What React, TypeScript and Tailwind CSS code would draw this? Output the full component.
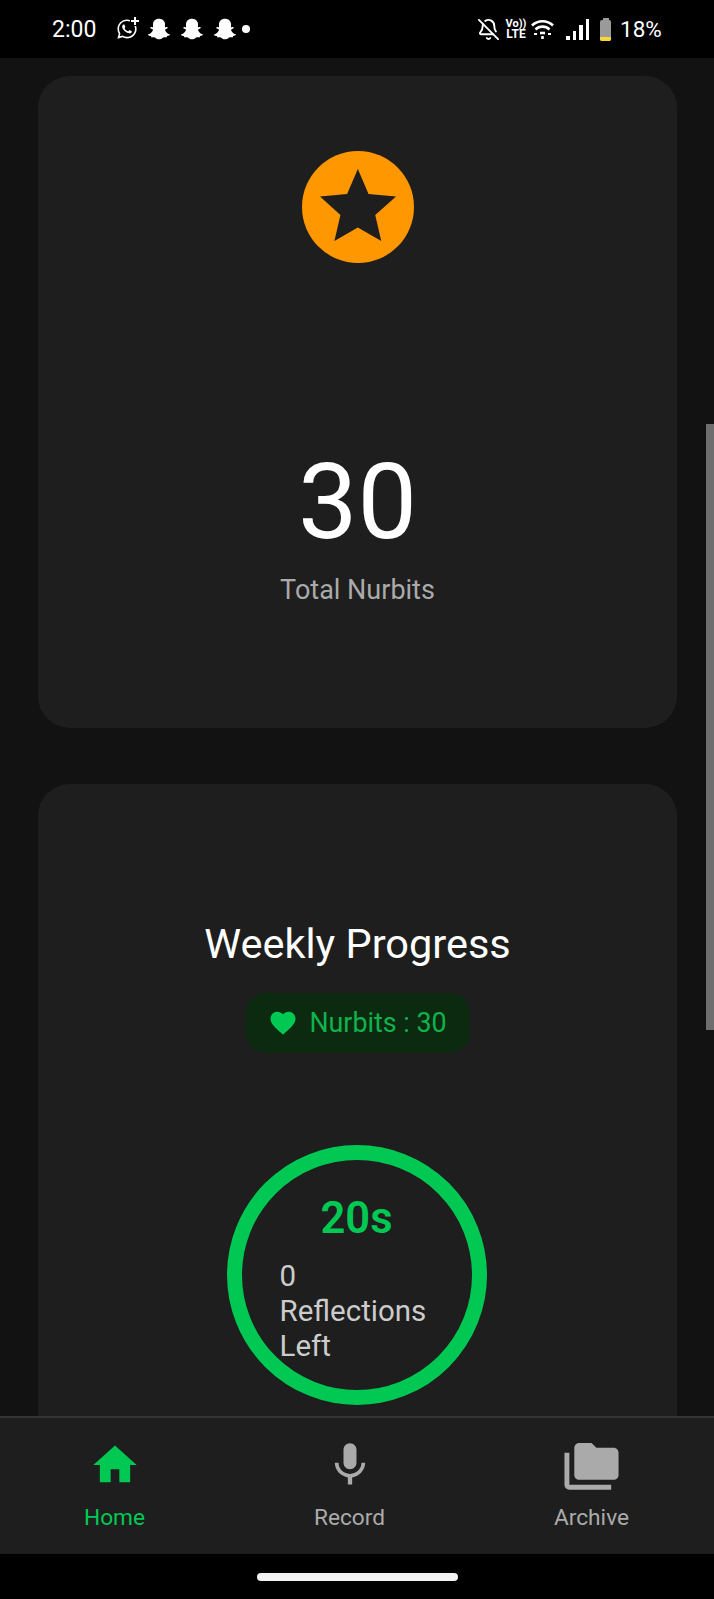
import { FaSnapchatGhost, FaWhatsapp } from 'react-icons/fa';
import { MdFavorite, MdFolderCopy, MdHome, MdMic } from 'react-icons/md';
import { BellOff } from 'lucide-react';

const NAV_ITEMS = [
  { label: 'Home', icon: MdHome, size: 52, active: true, width: 'w-[229px]', pad: 'pt-[21px]' },
  { label: 'Record', icon: MdMic, size: 52, active: false, width: 'w-[241px]', pad: 'pt-[21px]' },
  { label: 'Archive', icon: MdFolderCopy, size: 59, active: false, width: 'w-[243px]', pad: 'pt-[20px]' },
];

const StatusBar = () => (
  <div className="flex h-[58px] shrink-0 items-center bg-black pl-[52px] text-white">
    <span className="w-[64px] text-[23px] leading-none">2:00</span>
    <div className="relative h-[22px] w-[22px]">
      <FaWhatsapp size={22} />
      {/* 右上の「+」 */}
      <div className="absolute -top-[2px] -right-[2px] h-[10px] w-[10px] bg-black" />
      <svg className="absolute -top-[2px] -right-[2px]" width="10" height="10" viewBox="0 0 10 10">
        <path d="M5 1v8M1 5h8" stroke="white" strokeWidth="2" />
      </svg>
    </div>
    <div className="ml-[10px] flex items-center gap-[11px]">
      <FaSnapchatGhost size={22} />
      <FaSnapchatGhost size={22} />
      <FaSnapchatGhost size={22} />
    </div>
    <div className="ml-[6px] h-[8px] w-[8px] rounded-full bg-white" />

    <BellOff size={23} strokeWidth={2} className="ml-[227px]" />
    <div className="ml-[6px] flex w-[20px] flex-col items-center text-[12px] leading-[10px] font-bold">
      <span className="text-[11px]">Vo))</span>
      <span>LTE</span>
    </div>
    <svg className="ml-[5px]" width="23" height="20" viewBox="0 0 23 20" fill="none" stroke="white" strokeWidth="2.6">
      <path d="M1 6.5a15 15 0 0 1 21 0" />
      <path d="M4.5 10.5a10 10 0 0 1 14 0" />
      <path d="M9 14h5" />
      <path d="M11.5 17l0 3" />
      <path d="M3 15h3M17 15h3" strokeWidth="2" />
    </svg>
    <div className="ml-[12px] flex h-[21px] items-end gap-[3px]">
      <div className="h-[4px] w-[3.5px] bg-white" />
      <div className="h-[9px] w-[3.5px] bg-white" />
      <div className="h-[15px] w-[3.5px] bg-white" />
      <div className="h-[21px] w-[3.5px] bg-white" />
    </div>
    <div className="ml-[11px] flex h-[23px] w-[11px] flex-col items-center">
      <div className="h-[2px] w-[6px] bg-[#9a9a9a]" />
      <div className="flex w-full flex-1 flex-col justify-end overflow-hidden rounded-[2px] bg-[#9a9a9a]">
        <div className="h-[4px] bg-[#fdd835]" />
      </div>
    </div>
    <span className="ml-[9px] text-[22.5px] leading-none">18%</span>
  </div>
);

const BottomNav = () => (
  <nav className="flex h-[138px] shrink-0 border-t-2 border-[#333333] bg-[#1e1e1e]">
    {NAV_ITEMS.map((item) => {
      const Icon = item.icon;
      return (
        <div
          key={item.label}
          className={`flex h-full flex-col items-center ${item.width} ${item.active ? 'text-[#00c853]' : 'text-[#aaaaaa]'}`}
        >
          <div className={`h-[86px] ${item.pad}`}>
            <Icon size={item.size} />
          </div>
          <span className="text-[22.7px] leading-[28px]">{item.label}</span>
        </div>
      );
    })}
  </nav>
);

export default function App() {
  return (
    <div className="flex h-[1599px] w-[714px] flex-col overflow-hidden bg-black font-['Roboto',sans-serif]">
      <StatusBar />

      <main className="relative flex-1 overflow-hidden bg-[#121212] pt-[18px] pr-[37px] pl-[38px]">
        {/* Total Nurbits */}
        <section className="flex h-[652px] flex-col items-center rounded-[32px] bg-[#1e1e1e] pt-[75px]">
          <div className="flex h-[112px] w-[112px] items-center justify-center rounded-full bg-[#ff9800]">
            <svg className="mb-[4px]" width="76" height="72" viewBox="120 115 227 215">
              <polygon
                points="233,115 265,190 347,197 285,252 303,330 233,290 163,330 181,252 120,197 201,190"
                fill="#1e1e1e"
              />
            </svg>
          </div>
          <div className="mt-[181px] text-[106px] leading-[116px] text-white">30</div>
          <div className="mt-[15px] text-[27px] leading-[30px] text-[#aaaaaa]">Total Nurbits</div>
        </section>

        {/* Weekly Progress */}
        <section className="mt-[56px] flex h-[800px] flex-col items-center rounded-[32px] bg-[#1e1e1e] pt-[136px]">
          <h2 className="text-[41.5px] leading-[48px] text-white">Weekly Progress</h2>
          <div className="mt-[25px] flex h-[60px] w-[224px] items-center justify-center gap-[11px] rounded-[20px] bg-[#0c2a10] text-[26.8px] text-[#0fb34c]">
            <MdFavorite size={30} className="text-[#00c853]" />
            <span>Nurbits : 30</span>
          </div>
          <div className="mt-[92px] mr-[2px] flex h-[260px] w-[260px] flex-col items-center rounded-full border-[15px] border-[#00c853] pt-[33px]">
            <div className="text-[43.5px] leading-[52px] font-semibold text-[#00c853]">20s</div>
            <div className="mt-[14px] w-[154px] text-[29.5px] leading-[35px] text-[#cccccc]">0 Reflections Left</div>
          </div>
        </section>

        {/* スクロールバー */}
        <div className="absolute top-[366px] right-0 h-[606px] w-[8px] bg-[#6e6e6e]" />
      </main>

      <BottomNav />

      <div className="flex h-[45px] shrink-0 justify-center bg-black pt-[19px]">
        <div className="h-[8px] w-[201px] rounded-full bg-[#f2f2f2]" />
      </div>
    </div>
  );
}
